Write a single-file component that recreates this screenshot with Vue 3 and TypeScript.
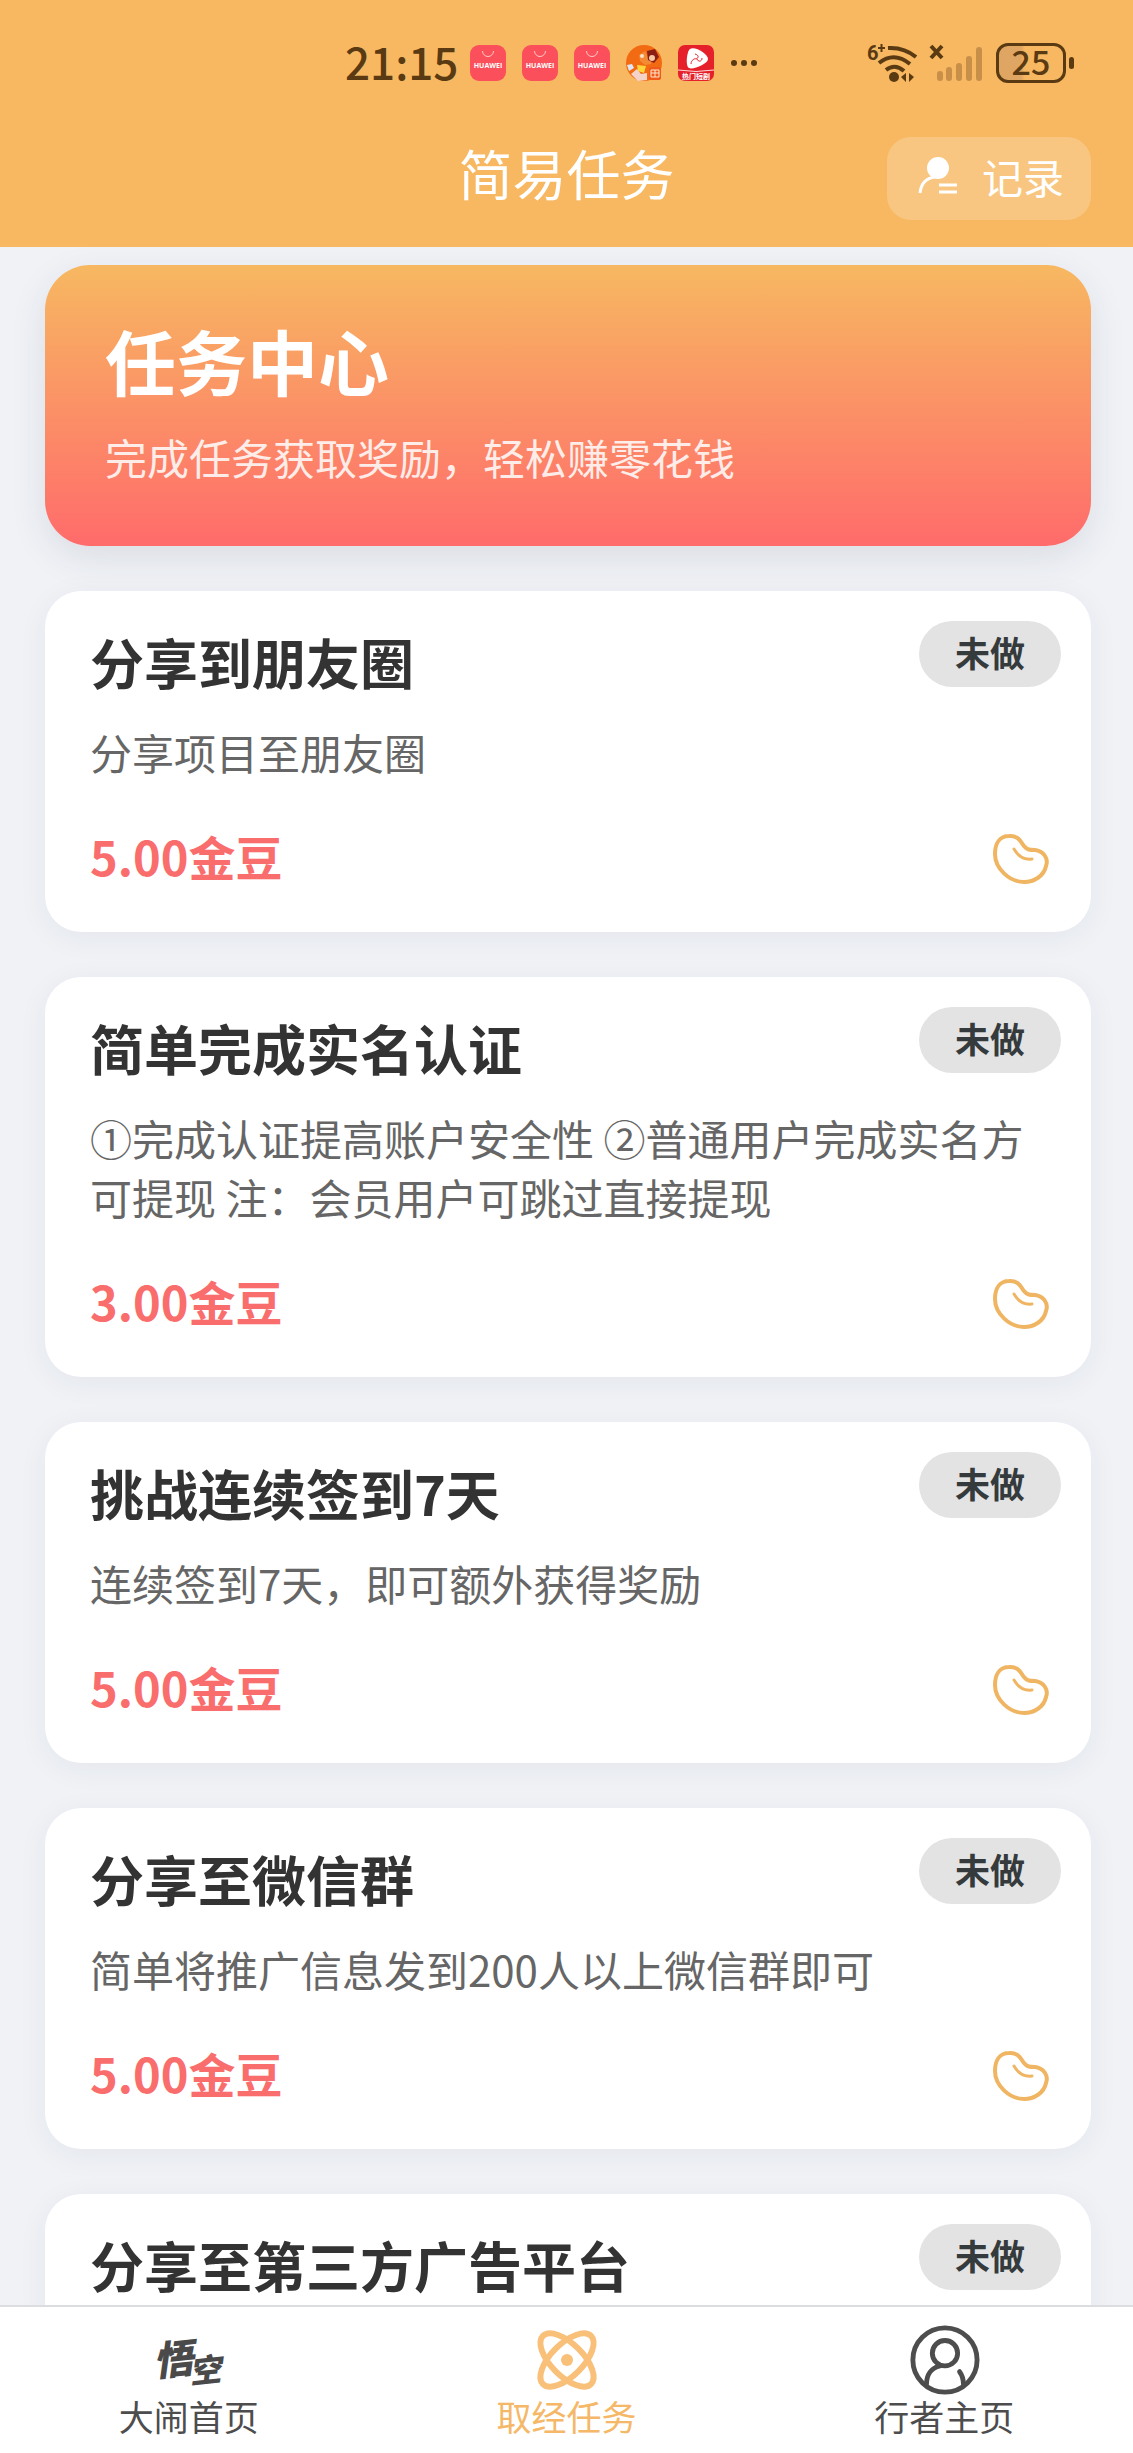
<script setup lang="ts">
interface Task {
  title: string
  desc?: string
  reward?: string
}

const tasks: Task[] = [
  { title: '分享到朋友圈', desc: '分享项目至朋友圈', reward: '5.00金豆' },
  {
    title: '简单完成实名认证',
    desc: '①完成认证提高账户安全性 ②普通用户完成实名方可提现 注：会员用户可跳过直接提现',
    reward: '3.00金豆',
  },
  { title: '挑战连续签到7天', desc: '连续签到7天，即可额外获得奖励', reward: '5.00金豆' },
  { title: '分享至微信群', desc: '简单将推广信息发到200人以上微信群即可', reward: '5.00金豆' },
  { title: '分享至第三方广告平台' },
]
</script>

<template>
  <div class="app">
    <header class="header">
      <div class="status">
        <div class="status-left">
          <span class="time">21:15</span>
          <svg v-for="n in 3" :key="n" class="notice" viewBox="0 0 36 36">
            <rect width="36" height="36" rx="9" fill="#fb4f5b" />
            <path d="M12.500 6a5.500 5.500 0 0 0 11 0" fill="none" stroke="#ffc9c4" stroke-width="1" />
            <text x="18" y="23" text-anchor="middle" class="brand">HUAWEI</text>
          </svg>
          <svg class="notice" viewBox="0 0 36 36">
            <circle cx="18" cy="18" r="18" fill="#f26a12" />
            <path d="M13 10l6-4 3 6 5-1-2 8-6 1-5-4z" fill="#f58a34" />
            <path d="M21 6l8-2 4 8-5 6-6-3z" fill="#8c1f14" />
            <circle cx="26" cy="13" r="3" fill="#f6c9a4" />
            <circle cx="16" cy="11" r="2" fill="#fbe0c6" />
            <path d="M11 20l9 1-2 7-6-2z" fill="#ffd43d" />
            <path d="M1 20l5-1 2 4-5 3z" fill="#dfe6f5" />
            <path d="M5 29l6-5 4 5 6-1v7l-9 1z" fill="#f4d4c8" />
            <rect x="23" y="22" width="12" height="13" rx="2" fill="#ef5a1a" />
            <path d="M25 25h8v7h-8zM29 25v7M25 28h8" fill="none" stroke="#ffe8d0" stroke-width="1" />
          </svg>
          <svg class="notice" viewBox="0 0 36 36">
            <rect width="36" height="36" rx="7" fill="#e5202b" />
            <path d="M12 4c5-3 18 5 18 10S15 25 11 23 9 6 12 4z" fill="#fff" />
            <path d="M17 9c4 1 4 4 1 5M24 13c0 4-4 4-5 1M13 19c0-4 4-6 5-5" fill="none" stroke="#e5202b" stroke-width="1" />
            <path d="M0 25q18 3 36 0" fill="none" stroke="#ffd8d4" stroke-width="1" />
            <text x="18" y="34" text-anchor="middle" class="brand cjk">热门短剧</text>
          </svg>
          <svg class="more" viewBox="0 0 28 8">
            <circle cx="4" cy="4" r="3" />
            <circle cx="14" cy="4" r="3" />
            <circle cx="24" cy="4" r="3" />
          </svg>
        </div>
        <div class="status-right">
          <svg class="wifi" viewBox="0 0 54 42">
            <text x="0" y="18" class="six">6</text>
            <path d="M11 6h7M14.500 2v8" fill="none" stroke="#5a3a12" stroke-width="2" />
            <g fill="none" stroke="#5a3a12" stroke-width="4">
              <path d="M21 6q16-1 28 9" />
              <path d="M12 21q15-12 31 1" />
              <path d="M19 28q9-7 18 1" />
            </g>
            <circle cx="27" cy="35" r="5" fill="#5a3a12" />
            <path d="M39 31v9l-5-5zM42 31v9l5-5z" fill="#5a3a12" />
          </svg>
          <svg class="signal" viewBox="0 0 54 42">
            <path d="M2 4l11 12M13 4l-11 12" stroke="#5a3a12" stroke-width="4" />
            <g stroke="#c78f48" stroke-width="6" stroke-linecap="round">
              <path d="M11 32v4M20 28v8M30 24v12M40 17v19M50 8v28" />
            </g>
          </svg>
          <div class="battery">25</div>
          <i class="nub"></i>
        </div>
      </div>
      <div class="nav">
        <h1 class="nav-title">简易任务</h1>
        <button type="button" class="record">
          <svg class="record-icon" viewBox="0 0 42 42">
            <circle cx="21" cy="13" r="11" fill="#fff" />
            <path d="M3 38c1-9 6-15 15-16M22 30h18M22 37h18" fill="none" stroke="#fff" stroke-width="3" />
          </svg>
          <span>记录</span>
        </button>
      </div>
    </header>

    <main class="content">
      <section class="banner">
        <h2>任务中心</h2>
        <p>完成任务获取奖励，轻松赚零花钱</p>
      </section>

      <article v-for="task in tasks" :key="task.title" class="card">
        <span class="badge">未做</span>
        <h3>{{ task.title }}</h3>
        <p v-if="task.desc" class="desc">{{ task.desc }}</p>
        <div v-if="task.reward" class="foot">
          <strong>{{ task.reward }}</strong>
          <svg class="bean" viewBox="0 0 56 60">
            <path d="M17 9C26 8 29 15 32 19S38 23 43 23C51 24 57 31 54 39C52 49 42 55 32 55C18 55 3 42 3 27C3 16 8 9 17 9Z" />
            <path d="M22 22C26 29 31 33 40 32" stroke-width="3" />
          </svg>
        </div>
      </article>
    </main>

    <nav class="tabs">
      <a href="#home" class="tab">
        <svg viewBox="0 0 72 72">
          <g class="logo">
            <text x="0" y="50" font-size="40" transform="rotate(-6 22 36)">悟</text>
            <text x="36" y="58" font-size="32" transform="rotate(-6 54 46)">空</text>
          </g>
        </svg>
        <span>大闹首页</span>
      </a>
      <a href="#tasks" class="tab active">
        <svg viewBox="0 0 72 72">
          <g fill="none" stroke="#f9c07a" stroke-width="6">
            <ellipse cx="37" cy="36" rx="34" ry="16" transform="rotate(45 37 36)" />
            <ellipse cx="37" cy="36" rx="34" ry="16" transform="rotate(-45 37 36)" />
          </g>
          <circle cx="37" cy="36" r="6" fill="#f9c07a" />
        </svg>
        <span>取经任务</span>
      </a>
      <a href="#mine" class="tab">
        <svg viewBox="0 0 74 72">
          <g fill="none" stroke="#4d4d4d" stroke-width="5" stroke-linecap="round">
            <circle cx="38" cy="36" r="33" />
            <circle cx="38" cy="29" r="13" />
            <path d="M33 42C24 44 19 51 19 61" />
            <path d="M53 48C56 52 57 56 57 61" />
          </g>
        </svg>
        <span>行者主页</span>
      </a>
    </nav>
  </div>
</template>

<style>
body {
  margin: 0;
  background: #f0f2f6;
}
</style>

<style scoped>
.app {
  display: flex;
  flex-direction: column;
  height: 100vh;
  font-family: "Noto Sans CJK SC", "Noto Sans", sans-serif;
  color: #333;
}

h1,
h2,
h3,
p {
  margin: 0;
}

svg {
  overflow: visible;
}

.header {
  flex: none;
  background: #f7b861;
  padding-bottom: 17px;
}

.status {
  display: flex;
  align-items: center;
  justify-content: space-between;
  height: 126px;
  padding: 0 59px 0 345px;
  color: #5a3a12;
}

.status-left,
.status-right {
  display: flex;
  align-items: center;
}

.status-left {
  gap: 16px;
}

.time {
  padding-bottom: 4px;
  font-size: 44px;
  line-height: 46px;
  font-weight: 500;
  margin-right: -4px;
}

.notice {
  width: 36px;
  height: 36px;
}

.brand {
  font: 700 7px "Open Sans", sans-serif;
  fill: #fff;
}

.cjk {
  font-family: "Noto Sans CJK SC", sans-serif;
}

.more {
  width: 28px;
  height: 8px;
  fill: #5a3a12;
}

.wifi,
.signal {
  width: 54px;
  height: 42px;
}

.signal {
  margin: 0 13px 0 8px;
}

.six {
  font: 700 20px Roboto, sans-serif;
  fill: #5a3a12;
}

.battery {
  box-sizing: border-box;
  width: 70px;
  height: 40px;
  border: 3px solid #5a3a12;
  border-radius: 12px;
  background: linear-gradient(90deg, #dfa663 0, #dfa663 22px, transparent 26px);
  font-size: 34px;
  line-height: 30px;
  font-weight: 500;
  text-align: center;
}

.nub {
  width: 5px;
  height: 12px;
  margin-left: 3px;
  border-radius: 3px;
  background: #5a3a12;
}

.nav {
  display: grid;
  grid-template-columns: 1fr auto 1fr;
  align-items: center;
  height: 104px;
  padding: 0 42px;
}

.nav-title {
  grid-column: 2;
  padding-bottom: 10px;
  font-size: 54px;
  line-height: 60px;
  font-weight: 400;
  color: #fff;
}

.record {
  justify-self: end;
  display: flex;
  align-items: center;
  gap: 23px;
  height: 83px;
  padding: 0 27px 4px 30px;
  border: 0;
  border-radius: 24px;
  background: rgba(255, 255, 255, 0.2);
  font: 400 41px "Noto Sans CJK SC", sans-serif;
  color: #fff;
}

.record-icon {
  width: 42px;
  height: 42px;
}

.content {
  flex: 1;
  min-height: 0;
  overflow-y: auto;
  scrollbar-width: none;
  padding: 18px 42px 0 45px;
}

.banner {
  padding: 56px 60px 60px;
  margin-bottom: 45px;
  border-radius: 45px;
  background: linear-gradient(180deg, #f7b861, #ff6b6b);
  box-shadow: 0 12px 36px rgba(40, 50, 70, 0.1);
  color: #fff;
}

.banner h2 {
  margin-bottom: 30px;
  font-size: 71px;
  line-height: 76px;
  font-weight: 700;
}

.banner p {
  font-size: 42px;
  line-height: 59px;
  opacity: 0.85;
}

.card {
  position: relative;
  margin-bottom: 45px;
  padding: 42px 45px 45px;
  border-radius: 36px;
  background: #fff;
  box-shadow: 0 6px 30px rgba(40, 45, 60, 0.06);
}

.badge {
  position: absolute;
  top: 30px;
  right: 30px;
  padding: 0 36px 4px;
  border-radius: 33px;
  background: #e3e3e3;
  font-size: 35px;
  line-height: 62px;
  font-weight: 700;
  color: #353b3d;
}

.card h3 {
  font-size: 54px;
  line-height: 58px;
  font-weight: 700;
}

.desc {
  margin-top: 31px;
  font-size: 42px;
  line-height: 59px;
  color: #666;
}

.foot {
  display: flex;
  align-items: center;
  justify-content: space-between;
  height: 60px;
  margin-top: 46px;
}

.foot strong {
  padding-bottom: 2px;
  font-size: 47px;
  line-height: 60px;
  font-weight: 700;
  color: #f96d6d;
}

.bean {
  width: 56px;
  height: 60px;
  margin-right: -2px;
  fill: none;
  stroke: #f0b562;
  stroke-width: 4;
  stroke-linecap: round;
}

.tabs {
  flex: none;
  display: grid;
  grid-template-columns: repeat(3, 1fr);
  height: 146px;
  border-top: 2px solid #dcdddf;
  background: #fff;
}

.tab {
  display: flex;
  flex-direction: column;
  align-items: center;
  padding-top: 17px;
  font-size: 35px;
  line-height: 40px;
  color: #4d4d4d;
  text-decoration: none;
}

.tab svg {
  width: 72px;
  height: 72px;
}

.active {
  color: #f5b868;
}

.logo {
  font-style: italic;
  font-weight: 900;
  fill: #4a4a4a;
}
</style>
